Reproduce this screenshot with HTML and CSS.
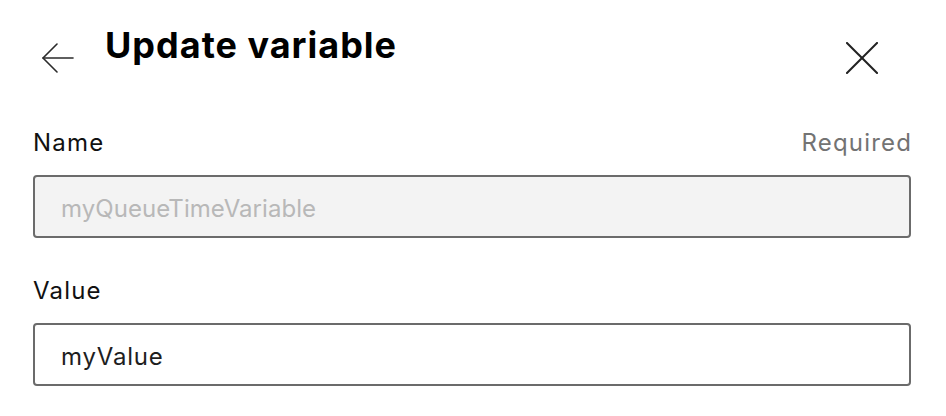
FILE: index.html
```html
<!DOCTYPE html>
<html lang="en">
<head>
<meta charset="utf-8">
<title>Update variable</title>
<link rel="stylesheet" href="styles.css">
</head>
<body>
<div class="panel">
  <header class="head">
    <button class="icon-btn back" aria-label="Back">
      <svg width="32" height="32" viewBox="0 0 32 32" fill="none" stroke="#2b2b2b" stroke-width="1.6" stroke-linecap="round" stroke-linejoin="round">
        <path d="M1 16 H31"/>
        <path d="M15 2 L1 16 L15 30"/>
      </svg>
    </button>
    <h1 class="title">Update variable</h1>
    <button class="icon-btn close" aria-label="Close">
      <svg width="32" height="32" viewBox="0 0 32 32" fill="none" stroke="#222" stroke-width="2" stroke-linecap="square">
        <path d="M1 1 L31 31"/>
        <path d="M31 1 L1 31"/>
      </svg>
    </button>
  </header>

  <div class="field first">
    <div class="label-row">
      <span class="label">Name</span>
      <span class="req">Required</span>
    </div>
    <div class="input disabled">myQueueTimeVariable</div>
  </div>

  <div class="field">
    <div class="label-row">
      <span class="label">Value</span>
    </div>
    <div class="input">myValue</div>
  </div>
</div>
</body>
</html>
```

FILE: styles.css
```css
* { box-sizing: border-box; }

html, body {
  margin: 0;
  padding: 0;
  background: #ffffff;
}

body {
  font-family: Inter, "Noto Sans", "Liberation Sans", sans-serif;
  color: #1b1b1b;
}

.panel {
  width: 946px;
  padding: 0 35px 0 33px;
}

.head {
  display: flex;
  align-items: flex-start;
  padding-top: 23px;
  height: 74px;
}

.icon-btn {
  background: none;
  border: none;
  padding: 0;
  margin: 19px 0 0 0;
  width: 32px;
  height: 32px;
  display: flex;
  flex: none;
}

.back {
  margin-left: 9px;
}

.title {
  margin: 0 0 0 31px;
  font-size: 36px;
  line-height: 44px;
  font-weight: 700;
  letter-spacing: 1px;
  color: #000;
  flex: 1;
}

.close {
  margin-right: 33px;
}

.field.first {
  margin-top: 53px;
}

.field {
  margin-top: 37px;
}

.label-row {
  display: flex;
  justify-content: space-between;
  font-size: 24px;
  line-height: 32px;
  letter-spacing: 1.2px;
}

.label {
  color: #111;
}

.req {
  color: #737373;
  margin-right: -1.2px;
}

.input {
  margin-top: 16px;
  height: 63px;
  border: 2px solid #6b6b6b;
  border-radius: 4px;
  padding: 16px 26px 0;
  font-size: 24px;
  line-height: 32px;
  letter-spacing: 0.8px;
  color: #1e1e1e;
  background: #fff;
}

.input.disabled {
  background: #f3f3f3;
  color: #b8b8b8;
  letter-spacing: 0.05px;
}
```
